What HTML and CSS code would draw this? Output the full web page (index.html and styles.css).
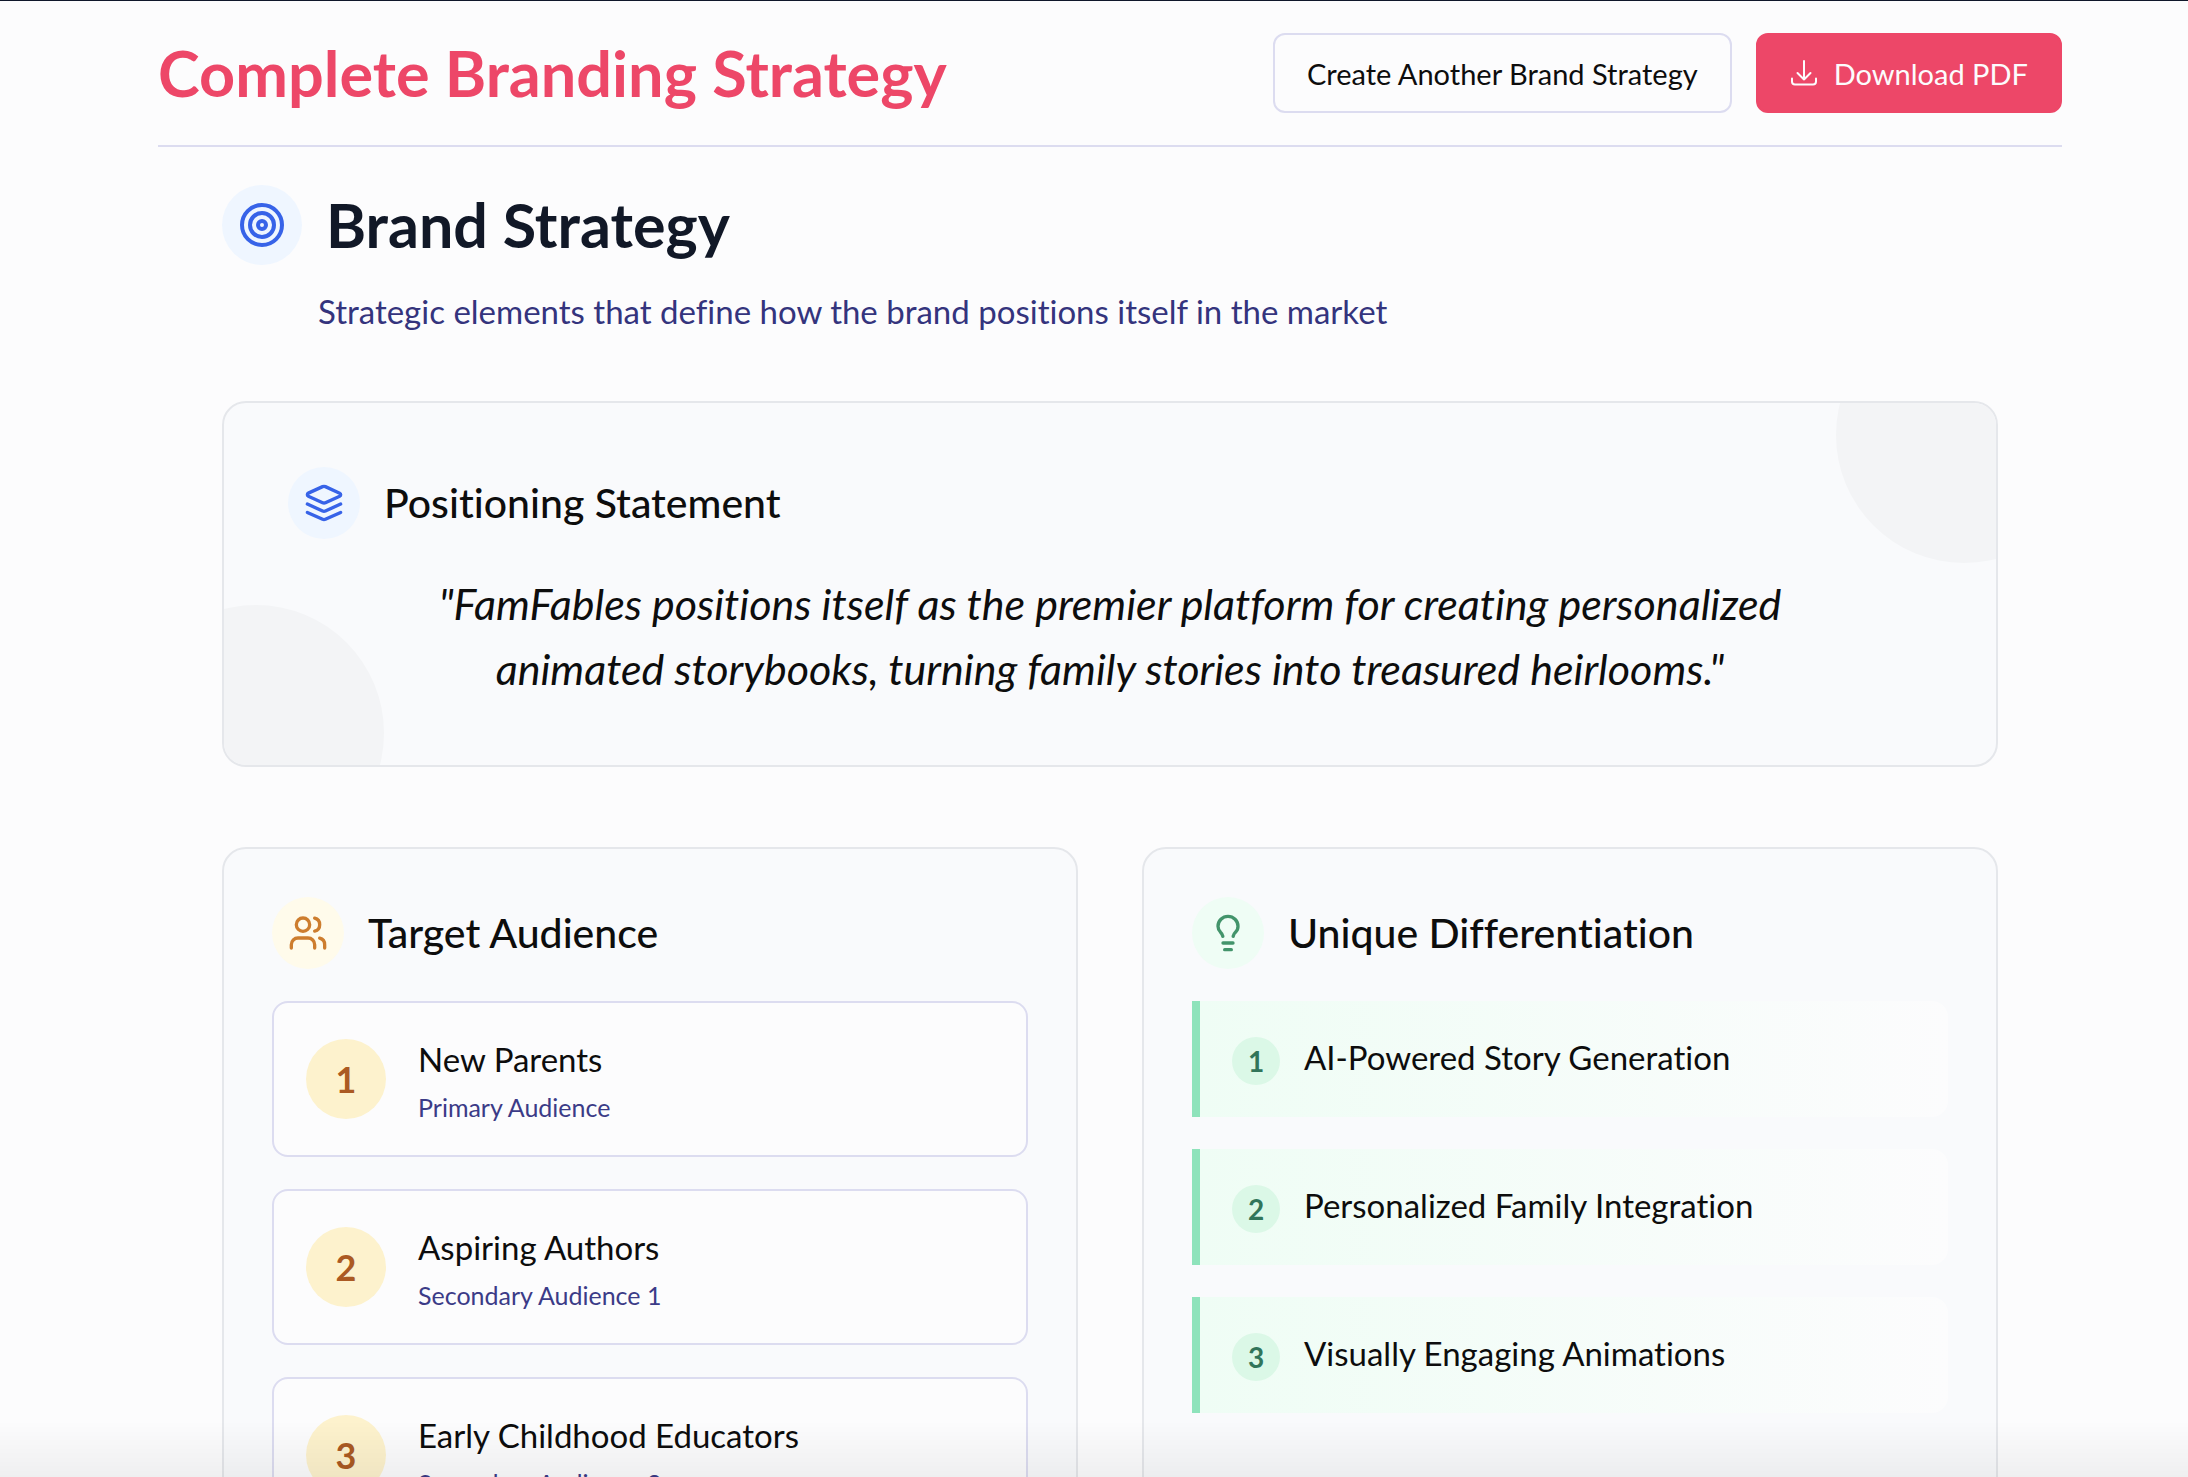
FILE: index.html
```html
<!DOCTYPE html>
<html lang="en">
<head>
  <meta charset="UTF-8" />
  <meta name="viewport" content="width=device-width, initial-scale=1.0" />
  <title>Complete Branding Strategy</title>
  <link rel="stylesheet" href="styles.css">
</head>
<body>
  <div class="page">
    <header class="page-header">
      <h1>Complete Branding Strategy</h1>
      <div class="actions">
        <button type="button" class="btn btn-outline">Create Another Brand Strategy</button>
        <button type="button" class="btn btn-primary">
          <svg class="btn-icon" viewBox="0 0 28 28" fill="none" stroke="currentColor" stroke-width="2" stroke-linecap="round" stroke-linejoin="round" aria-hidden="true">
            <path d="M14 2v18.500M7.500 14l6.500 6.500 6.500-6.500M2 19.500v3a3 3 0 0 0 3 3h18a3 3 0 0 0 3-3v-3" />
          </svg>
          Download PDF
        </button>
      </div>
    </header>

    <main>
      <section class="intro">
        <div class="intro-title">
          <span class="icon icon-lg blue">
            <svg viewBox="0 0 24 24" aria-hidden="true">
              <circle cx="12" cy="12" r="10" />
              <circle cx="12" cy="12" r="6" />
              <circle cx="12" cy="12" r="2" />
            </svg>
          </span>
          <h2>Brand Strategy</h2>
        </div>
        <p>Strategic elements that define how the brand positions itself in the market</p>
      </section>

      <section class="card statement">
        <div class="card-title">
          <span class="icon blue">
            <svg viewBox="0 0 24 24" aria-hidden="true">
              <path d="m12.83 2.18a2 2 0 0 0-1.66 0L2.6 6.08a1 1 0 0 0 0 1.83l8.58 3.91a2 2 0 0 0 1.66 0l8.58-3.9a1 1 0 0 0 0-1.83Z" />
              <path d="m22 17.65-9.17 4.16a2 2 0 0 1-1.66 0L2 17.65" />
              <path d="m22 12.65-9.17 4.16a2 2 0 0 1-1.66 0L2 12.65" />
            </svg>
          </span>
          <h3>Positioning Statement</h3>
        </div>
        <blockquote>"FamFables positions itself as the premier platform for creating personalized animated storybooks, turning family stories into treasured heirlooms."</blockquote>
      </section>

      <div class="columns">
        <section class="card">
          <div class="card-title">
            <span class="icon amber">
              <svg viewBox="0 0 24 24" aria-hidden="true">
                <path d="M16 21v-2a4 4 0 0 0-4-4H6a4 4 0 0 0-4 4v2" />
                <circle cx="9" cy="7" r="4" />
                <path d="M22 21v-2a4 4 0 0 0-3-3.87" />
                <path d="M16 3.13a4 4 0 0 1 0 7.75" />
              </svg>
            </span>
            <h3>Target Audience</h3>
          </div>
          <ul class="list">
            <li class="audience">
              <span class="number">1</span>
              <div>
                <h4>New Parents</h4>
                <p>Primary Audience</p>
              </div>
            </li>
            <li class="audience">
              <span class="number">2</span>
              <div>
                <h4>Aspiring Authors</h4>
                <p>Secondary Audience 1</p>
              </div>
            </li>
            <li class="audience">
              <span class="number">3</span>
              <div>
                <h4>Early Childhood Educators</h4>
                <p>Secondary Audience 2</p>
              </div>
            </li>
          </ul>
        </section>

        <section class="card">
          <div class="card-title">
            <span class="icon green">
              <svg viewBox="0 0 24 24" aria-hidden="true">
                <path d="M9 18h6" />
                <path d="M10 22h4" />
                <path d="M15.09 14c.18-.98.65-1.74 1.41-2.5A4.65 4.65 0 0 0 18 8 6 6 0 0 0 6 8c0 1 .23 2.23 1.5 3.5A4.61 4.61 0 0 1 8.91 14" />
              </svg>
            </span>
            <h3>Unique Differentiation</h3>
          </div>
          <ul class="list">
            <li class="difference"><span class="number">1</span><p>AI-Powered Story Generation</p></li>
            <li class="difference"><span class="number">2</span><p>Personalized Family Integration</p></li>
            <li class="difference"><span class="number">3</span><p>Visually Engaging Animations</p></li>
          </ul>
        </section>
      </div>
    </main>
  </div>
  <div class="fade"></div>
</body>
</html>
```

FILE: styles.css
```css
* { box-sizing: border-box; margin: 0; padding: 0; }
body { font-family: Lato, "Open Sans", sans-serif; font-size: 33px; font-variant-ligatures: none; color: #0d0d0d; background: #fcfcfd; border-top: 1px solid #0f172a; }
ul { list-style: none; }

.page { padding: 0 126px 64px 158px; }
.page-header { display: flex; justify-content: space-between; align-items: center; padding: 32px 0; border-bottom: 2px solid #dcdcf0; }
h1 { font-size: 63px; line-height: 72px; font-weight: 700; color: #ed4768; }
.actions { display: flex; gap: 24px; }
.btn { display: flex; align-items: center; gap: 16px; height: 80px; padding: 0 32px; border: 2px solid #dcdcf0; border-radius: 12px; background: #fcfcfd; font-family: inherit; font-size: 29px; color: #0d0d0d; cursor: pointer; }
.btn-primary { background: #ed4768; border-color: #ed4768; color: #fcfcfd; }
.btn-icon { width: 28px; height: 28px; }

main { padding: 38px 64px 0; }
.intro-title { display: flex; align-items: center; gap: 24px; }
h2 { font-size: 61px; line-height: 72px; font-weight: 700; color: #111827; }
.intro p { margin: 22px 0 66px 96px; line-height: 48px; color: #34347d; }

.icon { display: flex; align-items: center; justify-content: center; flex: none; width: 72px; height: 72px; border-radius: 50%; }
.icon svg { width: 40px; height: 40px; fill: none; stroke: currentColor; stroke-width: 2; stroke-linecap: round; stroke-linejoin: round; }
.icon-lg { width: 80px; height: 80px; }
.icon-lg svg { width: 48px; height: 48px; }
.blue { background: #eff6ff; color: #3763e8; }
.amber { background: #fffbeb; color: #cd7d2e; }
.green { background: #effdf5; color: #43946b; }

.card { padding: 48px; border: 2px solid #e5e7eb; border-radius: 24px; background: #f9fafc; }
.card-title { display: flex; align-items: center; gap: 24px; margin-bottom: 32px; }
h3 { font-size: 41px; line-height: 56px; font-weight: 500; }

.statement { position: relative; overflow: hidden; margin-bottom: 80px; padding: 64px; }
.statement::before, .statement::after { content: ""; position: absolute; width: 256px; height: 256px; border-radius: 50%; background: #f3f4f6; }
.statement::before { top: -96px; right: -96px; }
.statement::after { bottom: -96px; left: -96px; }
blockquote { position: relative; z-index: 1; max-width: 1400px; margin: 0 auto; font-size: 43px; line-height: 65px; font-style: italic; text-align: center; }

.columns { display: grid; grid-template-columns: 1fr 1fr; gap: 64px; }
.list { display: flex; flex-direction: column; gap: 32px; }
.number { display: flex; align-items: center; justify-content: center; flex: none; border-radius: 50%; font-weight: 700; }

.audience { display: flex; align-items: center; gap: 32px; padding: 32px; border: 2px solid #dcdcf0; border-radius: 16px; background: #fcfcfd; }
.audience .number { width: 80px; height: 80px; background: #fdf2cd; color: #ab5a23; font-size: 36px; }
h4 { font-size: 33px; line-height: 48px; font-weight: 400; }
.audience p { margin-top: 8px; font-size: 25px; line-height: 32px; color: #3b3b87; }

.difference { display: flex; align-items: flex-start; gap: 24px; padding: 32px; border-left: 8px solid #8ee3bb; border-radius: 0 16px 16px 0; background: linear-gradient(to right, #effdf5, #fcfcfd); }
.difference .number { width: 48px; height: 48px; margin-top: 4px; background: #dbf8e7; color: #31755a; font-size: 28px; }
.difference p { line-height: 48px; }

/* soft shade along the bottom of the window */
.fade { position: fixed; left: 0; right: 0; bottom: 0; height: 56px; background: linear-gradient(to bottom, rgba(0,0,0,0), rgba(0,0,0,0.05)); pointer-events: none; }
```
